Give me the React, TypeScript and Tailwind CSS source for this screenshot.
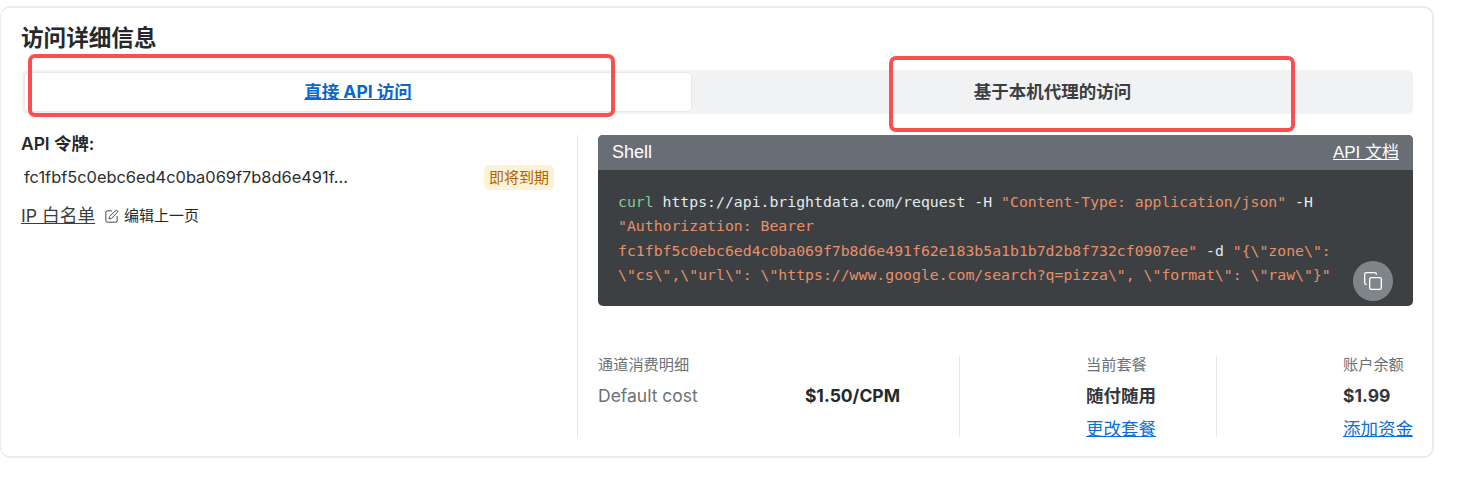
import { Copy, SquarePen } from "lucide-react";

const sans = "font-['Inter','Noto_Sans_CJK_SC',sans-serif]";

function Stat({ label, value, link }: { label: string; value: string; link: string }) {
  return (
    <div className="flex flex-col items-start">
      <div className="text-[15.2px] leading-[18px] text-[#6b7177] mt-[-1px]">{label}</div>
      <div className="text-[17.5px] leading-[24px] font-bold text-[#33373b] mt-[10px]">{value}</div>
      <a className="text-[17.5px] leading-[24px] text-[#0a6fd6] underline mt-[9px]">{link}</a>
    </div>
  );
}

export default function App() {
  return (
    <div className={`${sans} relative w-[1463px] h-[480px] bg-white pt-[6px] overflow-hidden`}>
      <div className="w-[1434px] h-[452px] border-2 border-[#e9ebee] border-l-[1px] rounded-[10px] pl-[20px] pr-[19px] pt-[15px]">
        <h1 className="text-[22.6px] leading-[30px] font-bold text-[#26292c]">访问详细信息</h1>
        <div className="flex h-[44px] mt-[17px] ml-[1px] bg-[#f1f2f4] rounded-[6px] p-[2px] pr-0">
          <div className="w-[668px] bg-white border border-[#e6e8eb] rounded-[4px] flex items-center justify-center text-[17.5px] font-bold text-[#0a66d0] underline">
            直接 API 访问
          </div>
          <div className="flex-1 flex items-center justify-center text-[17.5px] font-bold text-[#3a3e42]">
            基于本机代理的访问
          </div>
        </div>
        <div className="flex mt-[21px]">
          <div className="w-[557px] h-[302px] border-r border-[#e4e6e9] pr-[23px]">
            <div className="text-[17.4px] leading-[20px] font-semibold text-[#26292c] mt-[-1px]">API 令牌:</div>
            <div className="flex items-center justify-between mt-[10px]">
              <span className="text-[16.4px] leading-[26px] text-[#2a2d30] pl-[3px]">fc1fbf5c0ebc6ed4c0ba069f7b8d6e491f...</span>
              <span className="bg-[#fdf2d5] text-[#b35f00] text-[15px] leading-[25px] px-[5px] rounded-[5px]">即将到期</span>
            </div>
            <div className="flex items-center mt-[14px]">
              <span className="text-[17.7px] leading-[24px] text-[#3a3e42] underline">IP 白名单</span>
              <SquarePen className="w-[15px] h-[15px] ml-[9px] text-[#45494e]" strokeWidth={1.6} />
              <span className="text-[15px] ml-[5px] text-[#26292c]">编辑上一页</span>
            </div>
          </div>
          <div className="flex-1 pl-[20px]">
            <div className="relative rounded-[5px] overflow-hidden h-[171px] bg-[#3c4043]">
              <div className="h-[35px] bg-[#686e75] flex items-center justify-between px-[14px] font-['Liberation_Sans','Noto_Sans_CJK_SC',sans-serif] text-white">
                <span className="text-[18px]">Shell</span>
                <a className="text-[17px] underline">API 文档</a>
              </div>
              <div className="pl-[20px] pr-[15px] pt-[20px] font-['DejaVu_Sans_Mono',monospace] text-[14.8px] leading-[24.4px] text-[#e4eaee]">
                <span className="text-[#8cc79a]">curl</span> https://api.brightdata.com/request -H{" "}
                <span className="text-[#e88f68]">"Content-Type: application/json"</span> -H{" "}
                <span className="text-[#e88f68]">"Authorization: Bearer</span>{" "}
                <span className="text-[#e88f68]">fc1fbf5c0ebc6ed4c0ba069f7b8d6e491f62e183b5a1b1b7d2b8f732cf0907ee"</span> -d{" "}
                <span className="text-[#e88f68]">{'"{\\"zone\\":'}</span>{" "}
                <span className="text-[#e88f68]">{'\\"cs\\",\\"url\\": \\"https://www.google.com/search?q=pizza\\", \\"format\\": \\"raw\\"}"'}</span>
              </div>
              <button className="absolute right-[20px] bottom-[5px] w-[40px] h-[40px] rounded-full bg-[#80858a] flex items-center justify-center text-white">
                <Copy className="w-[20px] h-[20px]" strokeWidth={1.6} />
              </button>
            </div>
            <div className="flex mt-[50px] h-[81px]">
              <div className="w-[362px] border-r border-[#e4e6e9]">
                <div className="w-[302px]">
                  <div className="text-[15.2px] leading-[18px] text-[#6b7177]">通道消费明细</div>
                  <div className="flex justify-between items-center mt-[10px] text-[17.5px] leading-[24px]">
                    <span className="text-[#6b7177]">Default cost</span>
                    <span className="font-bold text-[#26292c]">$1.50/CPM</span>
                  </div>
                </div>
              </div>
              <div className="w-[257px] border-r border-[#e4e6e9] flex justify-end pr-[60px] pt-[1px]">
                <Stat label="当前套餐" value="随付随用" link="更改套餐" />
              </div>
              <div className="flex-1 flex justify-end pt-[1px]">
                <Stat label="账户余额" value="$1.99" link="添加资金" />
              </div>
            </div>
          </div>
        </div>
      </div>
      <div className="absolute left-[28px] top-[54px] w-[587px] h-[63px] border-[4px] border-[#f9504f] rounded-[7px]" />
      <div className="absolute left-[889px] top-[56px] w-[406px] h-[76px] border-[4px] border-[#f9504f] rounded-[7px]" />
    </div>
  );
}
